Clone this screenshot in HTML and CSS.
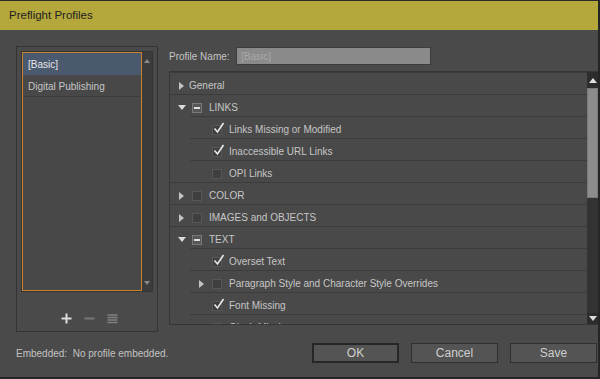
FILE: index.html
```html
<!DOCTYPE html>
<html lang="en">

<head>
	<meta charset="UTF-8">
	<title>Preflight Profiles</title>
	<link rel="stylesheet" href="styles.css">
</head>

<body>
	<div class="dialog">
		<div class="titlebar">Preflight Profiles</div>
		<div class="main">
			<div class="panes">
				<!-- profile list -->
				<div class="profiles">
					<div class="list-frame">
						<div class="list">
							<div class="item selected">[Basic]</div>
							<div class="item">Digital Publishing</div>
						</div>
						<div class="lscroll">
							<span class="tri-up small"></span>
							<span class="tri-down small"></span>
						</div>
					</div>
					<div class="tools">
						<svg width="11" height="11" viewBox="0 0 11 11"><path d="M5.5 0.5v10M0.5 5.5h10" stroke="#dcdcdc" stroke-width="2"/></svg>
						<svg width="11" height="11" viewBox="0 0 11 11"><path d="M0.5 5.5h10" stroke="#777" stroke-width="2"/></svg>
						<svg width="11" height="11" viewBox="0 0 11 11"><path d="M0.5 2h10M0.5 4.5h10M0.5 7h10M0.5 9.5h10" stroke="#808080" stroke-width="1.6"/></svg>
					</div>
				</div>

				<!-- profile editor -->
				<div class="editor">
					<div class="name-row">
						<label>Profile Name:</label>
						<div class="name-input">[Basic]</div>
					</div>
					<div class="tree">
						<div class="rows">
							<div class="row">
								<span class="tw"><span class="tri-right"></span></span>
								<span class="label plain">General</span>
							</div>
							<div class="row">
								<span class="tw"><span class="tri-down"></span></span>
								<span class="cb mixed"></span>
								<span class="label">LINKS</span>
							</div>
							<div class="row child">
								<span class="tw"></span>
								<span class="cb checked"><svg width="12" height="12" viewBox="0 0 12 12"><path d="M1.5 6.5l3 3.5 6-9" fill="none" stroke="#e8e8e8" stroke-width="1.6"/></svg></span>
								<span class="label">Links Missing or Modified</span>
							</div>
							<div class="row child">
								<span class="tw"></span>
								<span class="cb checked"><svg width="12" height="12" viewBox="0 0 12 12"><path d="M1.5 6.5l3 3.5 6-9" fill="none" stroke="#e8e8e8" stroke-width="1.6"/></svg></span>
								<span class="label">Inaccessible URL Links</span>
							</div>
							<div class="row child">
								<span class="tw"></span>
								<span class="cb"></span>
								<span class="label">OPI Links</span>
							</div>
							<div class="row">
								<span class="tw"><span class="tri-right"></span></span>
								<span class="cb"></span>
								<span class="label">COLOR</span>
							</div>
							<div class="row">
								<span class="tw"><span class="tri-right"></span></span>
								<span class="cb"></span>
								<span class="label">IMAGES and OBJECTS</span>
							</div>
							<div class="row">
								<span class="tw"><span class="tri-down"></span></span>
								<span class="cb mixed"></span>
								<span class="label">TEXT</span>
							</div>
							<div class="row child">
								<span class="tw"></span>
								<span class="cb checked"><svg width="12" height="12" viewBox="0 0 12 12"><path d="M1.5 6.5l3 3.5 6-9" fill="none" stroke="#e8e8e8" stroke-width="1.6"/></svg></span>
								<span class="label">Overset Text</span>
							</div>
							<div class="row child">
								<span class="tw"><span class="tri-right"></span></span>
								<span class="cb"></span>
								<span class="label">Paragraph Style and Character Style Overrides</span>
							</div>
							<div class="row child">
								<span class="tw"></span>
								<span class="cb checked"><svg width="12" height="12" viewBox="0 0 12 12"><path d="M1.5 6.5l3 3.5 6-9" fill="none" stroke="#e8e8e8" stroke-width="1.6"/></svg></span>
								<span class="label">Font Missing</span>
							</div>
							<div class="row child">
								<span class="tw"></span>
								<span class="cb"></span>
								<span class="label">Glyph Missing</span>
							</div>
						</div>
						<div class="tscroll">
							<div class="arrow-box"><span class="tri-up"></span></div>
							<div class="thumb"></div>
							<div class="track"></div>
							<div class="arrow-box low"><span class="tri-down"></span></div>
						</div>
					</div>
				</div>
			</div>

			<div class="footer">
				<div class="embedded">Embedded:&nbsp; No profile embedded.</div>
				<div class="buttons">
					<span class="btn default">OK</span>
					<span class="btn">Cancel</span>
					<span class="btn">Save</span>
				</div>
			</div>
		</div>
	</div>
</body>

</html>
```

FILE: styles.css
```css
* {
	margin: 0;
	padding: 0;
	box-sizing: border-box;
}

body {
	background: #1f1f1f;
	font-family: "Liberation Sans", Arial, sans-serif;
	font-size: 10px;
	color: #c8c8c8;
}

.dialog {
	width: 600px;
	height: 379px;
	background: #4a4a4a;
	border-top: 1px solid #2a2a2a;
	border-right: 2px solid #252525;
	border-bottom: 2px solid #252525;
	display: flex;
	flex-direction: column;
}

.titlebar {
	height: 29px;
	background: #b4a83d;
	color: #1d1d1d;
	font-size: 11.5px;
	line-height: 28px;
	padding-left: 9px;
}

.main {
	flex: 1;
	padding: 16px 0 0 16px;
}

.panes {
	display: flex;
	gap: 11px;
	align-items: flex-start;
}

/* left list */
.profiles {
	width: 142px;
	height: 286px;
	border: 1px solid #343434;
	padding: 4px;
}

.list-frame {
	display: flex;
	height: 241px;
	background: #3b3b3b;
	border: 1px solid #353535;
}

.list {
	width: 120px;
	border: 1px solid #c8812f;
	background: #484848;
}

.item {
	height: 22px;
	line-height: 23px;
	padding-left: 5px;
	border-bottom: 1px solid #3c3c3c;
	color: #c6c6c6;
}

.item.selected {
	background: #4b596f;
	color: #e6e6e6;
	border-bottom: none;
}

.lscroll {
	flex: 1;
	display: flex;
	flex-direction: column;
	justify-content: space-between;
	align-items: center;
	padding: 7px 0 6px;
}

.tools {
	display: flex;
	gap: 12px;
	padding: 21px 0 0 40px;
}

/* triangles */
.tri-right {
	display: inline-block;
	width: 0;
	height: 0;
	border-top: 4.5px solid transparent;
	border-bottom: 4.5px solid transparent;
	border-left: 5px solid #c4c4c4;
}

.tri-down {
	display: inline-block;
	width: 0;
	height: 0;
	border-left: 4.5px solid transparent;
	border-right: 4.5px solid transparent;
	border-top: 5px solid #dadada;
}

.tri-up {
	display: inline-block;
	width: 0;
	height: 0;
	border-left: 4px solid transparent;
	border-right: 4px solid transparent;
	border-bottom: 5px solid #e0e0e0;
}

.tri-up.small {
	border-left-width: 3px;
	border-right-width: 3px;
	border-bottom: 4px solid #8a8a8a;
}

.tri-down.small {
	border-left-width: 3px;
	border-right-width: 3px;
	border-top: 4px solid #8a8a8a;
}

/* editor */
.editor {
	flex: 1;
	padding-top: 1px;
}

.name-row {
	display: flex;
	align-items: center;
	height: 18px;
}

.name-row label {
	width: 67px;
	color: #c4c4c4;
	padding-top: 1px;
}

.name-input {
	width: 195px;
	height: 18px;
	background: #8a8a8a;
	border: 1px solid #3d3d3d;
	color: #a9a9a9;
	line-height: 17px;
	padding-left: 4px;
}

.tree {
	display: flex;
	height: 254px;
	margin-top: 6px;
	border: 1px solid #363636;
	border-right: none;
	background: #494949;
}

.rows {
	flex: 1;
	overflow: hidden;
}

.row {
	display: flex;
	align-items: center;
	height: 22px;
	border-top: 1px solid #3c3c3c;
	padding-left: 7px;
	padding-top: 4px;
}

.row.child {
	margin-left: 20px;
}

.tw {
	width: 9px;
	display: flex;
	justify-content: center;
	margin-right: 6px;
}

.cb {
	position: relative;
	width: 10px;
	height: 10px;
	background: #3f3f3f;
	border: 1px solid #575757;
	margin-right: 7px;
}

.cb.mixed {
	background: #565656;
	border-color: #7a7a7a;
}

.cb.mixed::after {
	content: "";
	position: absolute;
	left: 1px;
	top: 3px;
	width: 6px;
	height: 2px;
	background: #e0e0e0;
}

.cb svg {
	position: absolute;
	left: 0;
	top: -4px;
}

.label {
	color: #c6c6c6;
	white-space: nowrap;
}

.label.plain {
	margin-left: -3px;
}

.tscroll {
	width: 11px;
	display: flex;
	flex-direction: column;
	background: #333;
}

.arrow-box {
	height: 16px;
	background: #2c2c2c;
	display: flex;
	align-items: center;
	justify-content: center;
}

.arrow-box.low {
	height: 11px;
}

.thumb {
	height: 110px;
	background: #8c8c8c;
	border: 1px solid #7a7a7a;
}

.track {
	flex: 1;
}

/* footer */
.footer {
	display: flex;
	align-items: center;
	margin-top: 11px;
	height: 20px;
}

.embedded {
	color: #c2c2c2;
}

.buttons {
	display: flex;
	gap: 12px;
	margin-left: auto;
	margin-right: 1px;
}

.btn {
	width: 87px;
	height: 20px;
	background: #545454;
	border: 1px solid #2f2f2f;
	text-align: center;
	line-height: 19px;
	font-size: 12px;
	color: #cfcfcf;
}

.btn.default {
	border: 2px solid #262626;
	line-height: 17px;
}
```
